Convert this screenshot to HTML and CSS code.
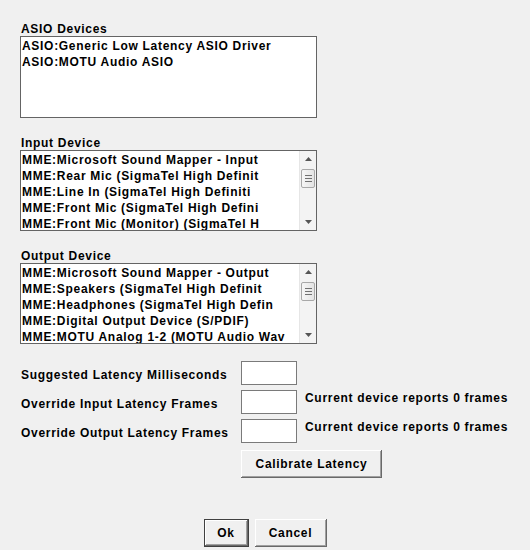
FILE: index.html
```html
<!DOCTYPE html>
<html>
<head>
<meta charset="utf-8">
<link rel="stylesheet" href="styles.css">
</head>
<body>
<div class="dialog">
  <section class="group">
    <div class="label">ASIO Devices</div>
    <div class="listbox tall">
      <div class="items">
        <div>ASIO:Generic Low Latency ASIO Driver</div>
        <div>ASIO:MOTU Audio ASIO</div>
      </div>
    </div>
  </section>
  <section class="group">
    <div class="label">Input Device</div>
    <div class="listbox">
      <div class="items">
        <div>MME:Microsoft Sound Mapper - Input</div>
        <div>MME:Rear Mic (SigmaTel High Definit</div>
        <div>MME:Line In (SigmaTel High Definiti</div>
        <div>MME:Front Mic (SigmaTel High Defini</div>
        <div>MME:Front Mic (Monitor) (SigmaTel H</div>
      </div>
      <div class="scrollbar">
        <svg class="arrow" width="7" height="4" viewBox="0 0 7 4"><path d="M3.5 0 L7 4 L0 4 Z" fill="#555"/></svg>
        <div class="thumb"><span></span><span></span><span></span></div>
        <div class="spacer"></div>
        <svg class="arrow" width="7" height="4" viewBox="0 0 7 4"><path d="M0 0 L7 0 L3.5 4 Z" fill="#555"/></svg>
      </div>
    </div>
  </section>
  <section class="group">
    <div class="label">Output Device</div>
    <div class="listbox">
      <div class="items">
        <div>MME:Microsoft Sound Mapper - Output</div>
        <div>MME:Speakers (SigmaTel High Definit</div>
        <div>MME:Headphones (SigmaTel High Defin</div>
        <div>MME:Digital Output Device (S/PDIF)</div>
        <div>MME:MOTU Analog 1-2 (MOTU Audio Wav</div>
      </div>
      <div class="scrollbar">
        <svg class="arrow" width="7" height="4" viewBox="0 0 7 4"><path d="M3.5 0 L7 4 L0 4 Z" fill="#555"/></svg>
        <div class="thumb"><span></span><span></span><span></span></div>
        <div class="spacer"></div>
        <svg class="arrow" width="7" height="4" viewBox="0 0 7 4"><path d="M0 0 L7 0 L3.5 4 Z" fill="#555"/></svg>
      </div>
    </div>
  </section>

  <div class="fields">
    <div class="flabel">Suggested Latency Milliseconds</div>
    <div class="textbox"></div>
    <div class="note"></div>

    <div class="flabel">Override Input Latency Frames</div>
    <div class="textbox"></div>
    <div class="note">Current device reports 0 frames</div>

    <div class="flabel">Override Output Latency Frames</div>
    <div class="textbox"></div>
    <div class="note">Current device reports 0 frames</div>

    <div></div>
    <button class="btn calibrate">Calibrate Latency</button>
    <div></div>
  </div>

  <div class="actions">
    <button class="btn default ok">Ok</button>
    <button class="btn cancel">Cancel</button>
  </div>
</div>
</body>
</html>
```

FILE: styles.css
```css
html, body {
  margin: 0;
  padding: 0;
  background: #f0f0f0;
}
body {
  width: 530px;
  height: 550px;
  overflow: hidden;
  font-family: "Liberation Sans", Arial, sans-serif;
  font-weight: bold;
  font-size: 12px;
  letter-spacing: 0.7px;
  color: #000;
}
.dialog {
  padding: 22px 0 0 20px;
}
.group {
  margin-bottom: 18px;
  width: 297px;
}
.label {
  height: 14px;
  line-height: 14px;
  padding-left: 1px;
}
.listbox {
  box-sizing: border-box;
  height: 81px;
  border: 1px solid #646464;
  background: #fff;
  display: flex;
  overflow: hidden;
}
.listbox.tall {
  height: 82px;
}
.items {
  flex: 1;
  padding: 1px 0 0 1px;
  overflow: hidden;
  white-space: nowrap;
}
.items div {
  height: 16px;
  line-height: 16px;
}
.scrollbar {
  width: 16px;
  background: #f3f3f3;
  border-left: 1px solid #e6e6e6;
  display: flex;
  flex-direction: column;
  align-items: center;
}
.arrow {
  margin: 6px 0 6px;
  flex: none;
}
.thumb {
  box-sizing: border-box;
  width: 14px;
  height: 19px;
  margin-top: 2px;
  border: 1px solid #a8a8a8;
  border-radius: 2px;
  background: linear-gradient(to right, #f6f6f6, #e4e4e4);
  display: flex;
  flex-direction: column;
  align-items: center;
  justify-content: center;
  gap: 2px;
}
.thumb span {
  display: block;
  width: 7px;
  height: 1px;
  background: #707070;
}
.spacer {
  flex: 1;
}
.fields {
  display: grid;
  grid-template-columns: 221px 56px auto;
  grid-template-rows: 24px 24px 24px 28px;
  row-gap: 5px;
  margin-top: -1px;
}
.flabel {
  padding-left: 1px;
  line-height: 14px;
  align-self: end;
  padding-bottom: 3px;
  white-space: nowrap;
}
.textbox {
  box-sizing: border-box;
  border: 1px solid #7a7a7a;
  background: #fff;
}
.note {
  padding-left: 8px;
  line-height: 14px;
  padding-top: 1px;
  white-space: nowrap;
}
.btn {
  box-sizing: border-box;
  font-family: "Liberation Sans", Arial, sans-serif;
  font-weight: bold;
  font-size: 12px;
  letter-spacing: 0.7px;
  color: #000;
  background: #f0f0f0;
  border: none;
  padding: 0;
  margin: 0;
  box-shadow: inset -1px -1px 0 #696969, inset 1px 1px 0 #fff, inset -2px -2px 0 #a0a0a0;
}
.calibrate {
  width: 141px;
  height: 28px;
  margin-top: 2px;
}
.actions {
  display: flex;
  justify-content: center;
  gap: 6px;
  margin-top: 43px;
  padding-right: 20px;
}
.ok {
  width: 45px;
  height: 28px;
}
.cancel {
  width: 72px;
  height: 28px;
}
.default {
  box-shadow: inset 0 0 0 1px #404040, inset -2px -2px 0 #696969, inset 2px 2px 0 #fff, inset -3px -3px 0 #a0a0a0;
}
```
